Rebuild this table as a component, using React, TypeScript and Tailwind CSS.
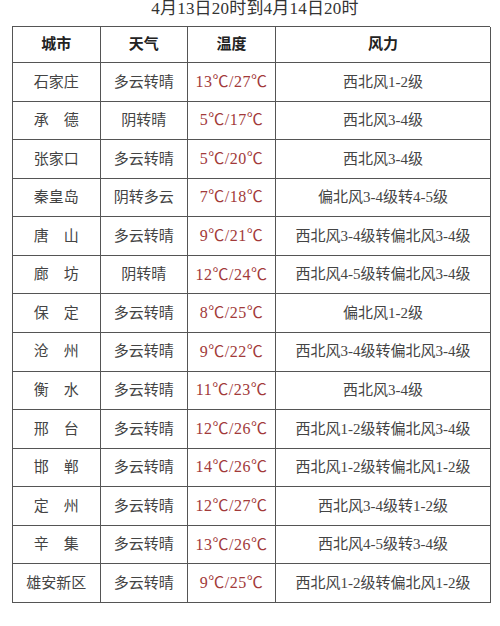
import React from "react";

const rows: [string, string, string, string][] = [
  ["石家庄", "多云转晴", "13℃/27℃", "西北风1-2级"],
  ["承\u3000德", "阴转晴", "5℃/17℃", "西北风3-4级"],
  ["张家口", "多云转晴", "5℃/20℃", "西北风3-4级"],
  ["秦皇岛", "阴转多云", "7℃/18℃", "偏北风3-4级转4-5级"],
  ["唐\u3000山", "多云转晴", "9℃/21℃", "西北风3-4级转偏北风3-4级"],
  ["廊\u3000坊", "阴转晴", "12℃/24℃", "西北风4-5级转偏北风3-4级"],
  ["保\u3000定", "多云转晴", "8℃/25℃", "偏北风1-2级"],
  ["沧\u3000州", "多云转晴", "9℃/22℃", "西北风3-4级转偏北风3-4级"],
  ["衡\u3000水", "多云转晴", "11℃/23℃", "西北风3-4级"],
  ["邢\u3000台", "多云转晴", "12℃/26℃", "西北风1-2级转偏北风3-4级"],
  ["邯\u3000郸", "多云转晴", "14℃/26℃", "西北风1-2级转偏北风1-2级"],
  ["定\u3000州", "多云转晴", "12℃/27℃", "西北风3-4级转1-2级"],
  ["辛\u3000集", "多云转晴", "13℃/26℃", "西北风4-5级转3-4级"],
  ["雄安新区", "多云转晴", "9℃/25℃", "西北风1-2级转偏北风1-2级"],
];

const font = { fontFamily: '"Liberation Serif", "Noto Sans CJK SC", serif' };

export default function App() {
  return (
    <div className="w-[500px] h-[626px] bg-white overflow-hidden" style={font}>
      <div className="h-[26px] flex justify-center">
        <div className="text-[17px] leading-[18px] text-[#333] tracking-[0.2px] pl-[10px]">
          4月13日20时到4月14日20时
        </div>
      </div>
      <div className="ml-[12px] w-[478px] grid grid-cols-[87.5px_87.5px_88px_215px] grid-rows-[36px_repeat(14,38.57px)] border-l border-t border-[#555]">
        {["城市", "天气", "温度", "风力"].map((h) => (
          <div
            key={h}
            className="border-r border-b border-[#555] flex items-center justify-center text-[15px] font-bold text-[#222]"
          >
            {h}
          </div>
        ))}
        {rows.map((r) => (
          <React.Fragment key={r[0]}>
            <div className="border-r border-b border-[#555] flex items-center justify-center text-[15px] text-[#444]">
              {r[0]}
            </div>
            <div className="border-r border-b border-[#555] flex items-center justify-center text-[15px] text-[#444]">
              {r[1]}
            </div>
            <div className="border-r border-b border-[#555] flex items-center justify-center text-[16px] text-[#a23a3a] tracking-[0.5px]">
              {r[2]}
            </div>
            <div className="border-r border-b border-[#555] flex items-center justify-center text-[15px] text-[#444]">
              {r[3]}
            </div>
          </React.Fragment>
        ))}
      </div>
    </div>
  );
}
